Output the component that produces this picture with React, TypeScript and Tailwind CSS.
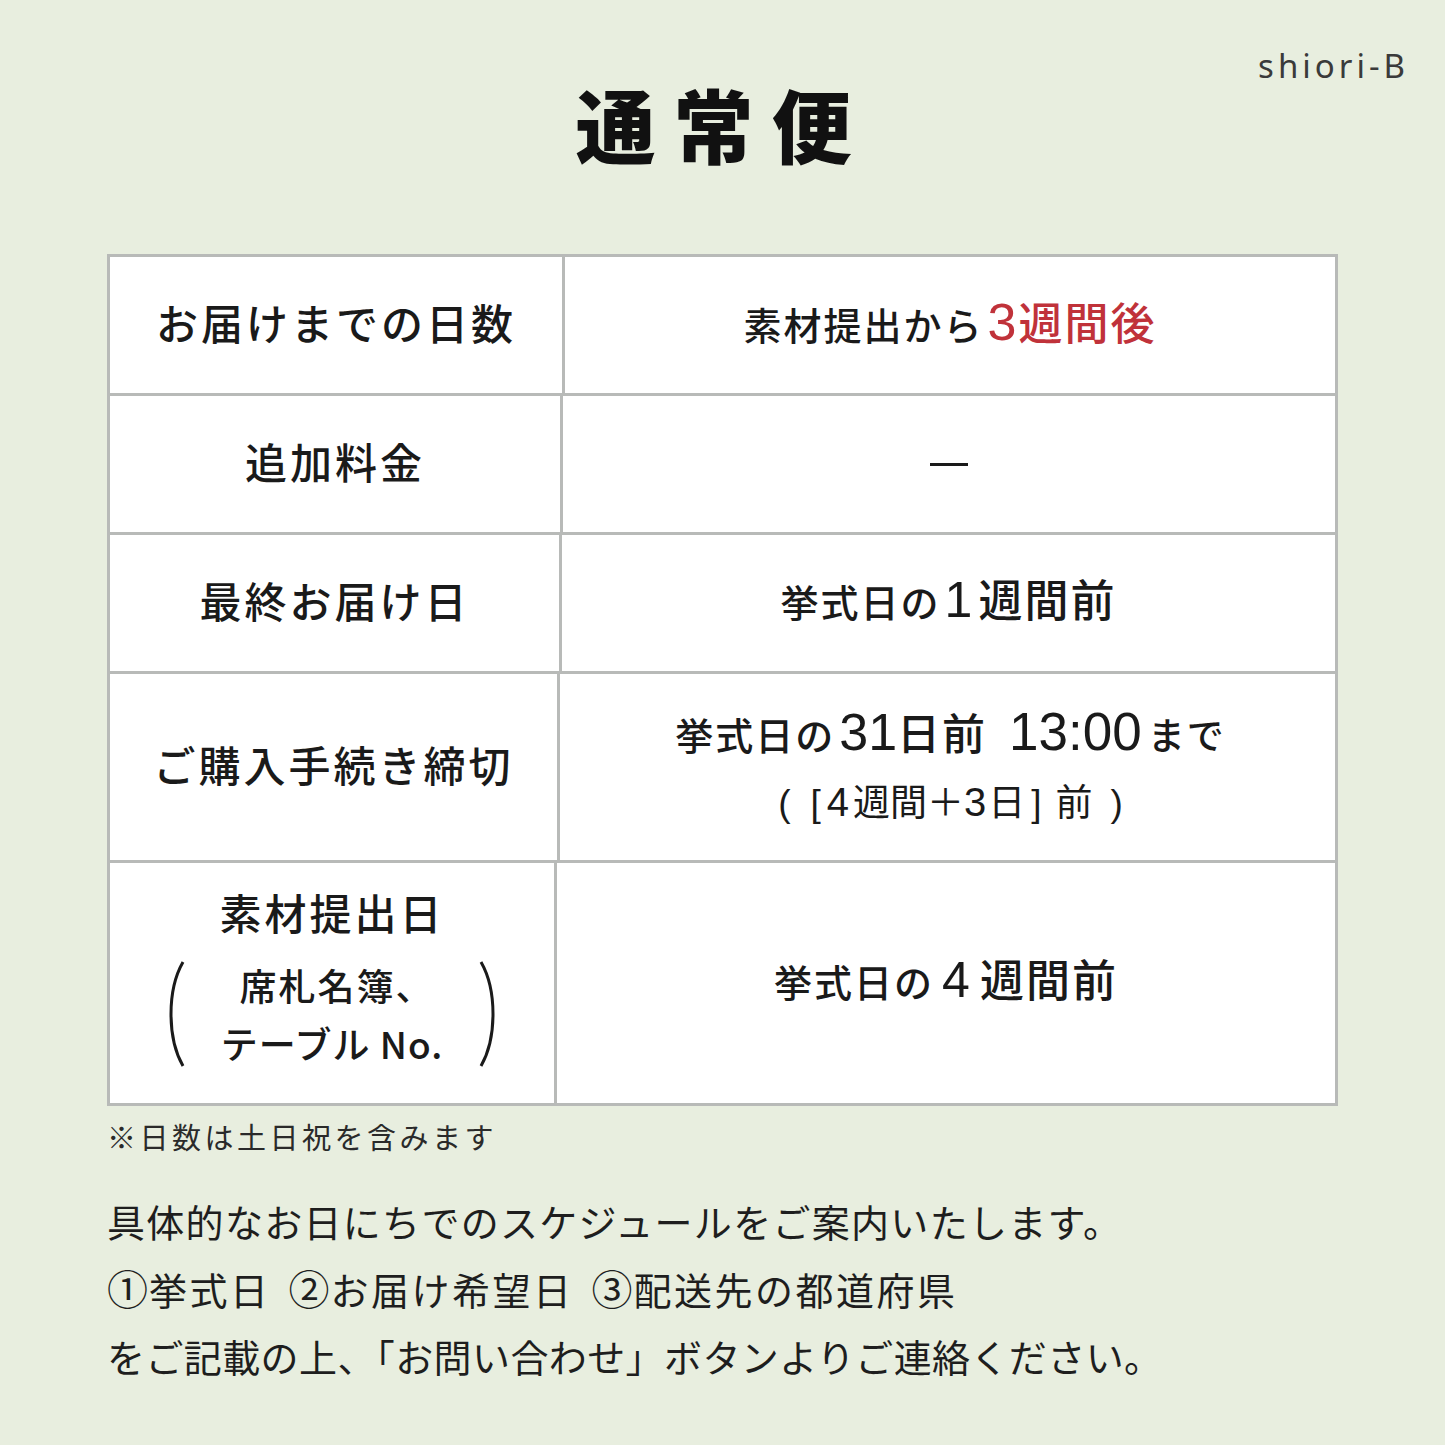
import React from "react";

const jp = "font-['Noto_Sans_CJK_JP','Noto_Sans',sans-serif]";
const num = "font-['Liberation_Sans','Noto_Sans_CJK_JP',sans-serif]";

function Paren({ flip }: { flip?: boolean }) {
  return (
    <svg
      width="24"
      height="108"
      viewBox="0 0 24 108"
      className={flip ? "-scale-x-100" : ""}
    >
      <path
        d="M20 2 C4 30 4 78 20 106"
        fill="none"
        stroke="#1a1a1a"
        strokeWidth="3"
      />
    </svg>
  );
}

interface RowProps {
  left: React.ReactNode;
  right: React.ReactNode;
  height: string;
  leftWidth: string;
  first?: boolean;
}

function Row({ left, right, height, leftWidth, first }: RowProps) {
  return (
    <div
      className={`flex ${height} ${first ? "" : "border-t-[3px] border-[#b8bab8]"}`}
    >
      <div
        className={`${leftWidth} flex shrink-0 items-center justify-center border-r-[3px] border-[#b8bab8] pb-[7px]`}
      >
        {left}
      </div>
      <div className="flex flex-1 items-center justify-center pb-[7px]">
        {right}
      </div>
    </div>
  );
}

const labelCls = `${jp} text-[42px] font-medium tracking-[3px] leading-none text-[#1a1a1a]`;
const valCls = `${jp} text-[38px] font-medium tracking-[2px] leading-none text-[#1a1a1a]`;

function Circled({ children }: { children: React.ReactNode }) {
  return (
    <span className="inline-block w-[42px] text-center text-[41px]">
      {children}
    </span>
  );
}

export default function App() {
  return (
    <div className="relative min-h-[1445px] w-[1445px] bg-[#e8eedf]">
      <div
        className={`absolute right-[36px] top-[41px] font-['Noto_Sans',sans-serif] text-[33px] tracking-[4px] text-[#3a3a3a]`}
      >
        shiori-B
      </div>

      <div className="flex flex-col items-center pt-[82px]">
        <h1
          className={`${jp} text-[80px] font-black leading-none tracking-[18px] text-[#111]`}
        >
          通常便
        </h1>
      </div>

      <div className="px-[107px] pt-[92px]">
        <div className="w-[1231px] border-[3px] border-[#b8bab8] bg-white">
          <Row
            first
            height="h-[136px]"
            leftWidth="w-[455px]"
            left={<span className={labelCls}>お届けまでの日数</span>}
            right={
              <span className={`${valCls} flex items-baseline`}>
                素材提出から
                <span className={`${num} ml-[4px] text-[52px] font-normal text-[#c0323a]`}>
                  3
                </span>
                <span className="text-[44px] text-[#c0323a]">週間後</span>
              </span>
            }
          />
          <Row
            height="h-[139px]"
            leftWidth="w-[453px]"
            left={<span className={labelCls}>追加料金</span>}
            right={<span className="mt-[7px] block h-[3px] w-[38px] bg-[#1a1a1a]" />}
          />
          <Row
            height="h-[139px]"
            leftWidth="w-[452px]"
            left={<span className={labelCls}>最終お届け日</span>}
            right={
              <span className={`${valCls} flex items-baseline`}>
                挙式日の
                <span className={`${num} mx-[4px] text-[50px] font-normal`}>1</span>
                <span className="text-[44px]">週間前</span>
              </span>
            }
          />
          <Row
            height="h-[189px]"
            leftWidth="w-[450px]"
            left={<span className={labelCls}>ご購入手続き締切</span>}
            right={
              <div className="flex flex-col items-center gap-[24px] pl-[6px]">
                <span className={`${valCls} flex items-baseline`}>
                  挙式日の
                  <span className={`${num} ml-[4px] text-[52px] font-normal tracking-normal`}>
                    31
                  </span>
                  <span className="text-[43px]">日前</span>
                  <span
                    className={`${num} ml-[22px] text-[53px] font-normal tracking-normal`}
                  >
                    13:00
                  </span>
                  <span className="ml-[6px] text-[37px]">まで</span>
                </span>
                <span
                  className={`${jp} flex items-baseline text-[37px] leading-none text-[#1a1a1a]`}
                >
                  <span className={num}>(</span>
                  <span className={`${num} ml-[20px]`}>[</span>
                  <span className={`${num} ml-[6px] text-[40px]`}>4</span>
                  <span className="ml-[4px]">週間</span>
                  <span>＋</span>
                  <span className={`${num} text-[40px]`}>3</span>
                  <span className="ml-[2px]">日</span>
                  <span className={`${num} ml-[6px]`}>]</span>
                  <span className="ml-[14px]">前</span>
                  <span className={`${num} ml-[18px]`}>)</span>
                </span>
              </div>
            }
          />
          <Row
            height="h-[243px]"
            leftWidth="w-[447px]"
            left={
              <div className="flex flex-col items-center">
                <span className={labelCls}>素材提出日</span>
                <div className="mt-[27px] flex items-center gap-[34px]">
                  <Paren />
                  <div
                    className={`${jp} flex flex-col items-center gap-[21px] text-[37px] font-medium leading-none text-[#1a1a1a]`}
                  >
                    <span className="pl-[10px] tracking-[2px]">席札名簿、</span>
                    <span className="tracking-[1px]">テーブル No.</span>
                  </div>
                  <Paren flip />
                </div>
              </div>
            }
            right={
              <span className={`${valCls} flex items-baseline`}>
                挙式日の
                <span className={`${num} mx-[8px] text-[50px] font-normal`}>4</span>
                <span className="text-[44px]">週間前</span>
              </span>
            }
          />
        </div>

        <p className={`${jp} mt-[16px] text-[29px] leading-none tracking-[3.5px] text-[#2a2a2a]`}>
          ※日数は土日祝を含みます
        </p>

        <div
          className={`${jp} mt-[36px] text-[38px] leading-[67px] text-[#1e1e1e]`}
        >
          <p className="tracking-[1.3px]">具体的なお日にちでのスケジュールをご案内いたします。</p>
          <p className="tracking-[2.5px]">
            <Circled>①</Circled>挙式日
            <span className="inline-block w-[18px]" />
            <Circled>②</Circled>お届け希望日
            <span className="inline-block w-[18px]" />
            <Circled>③</Circled>配送先の都道府県
          </p>
          <p className="tracking-[0.4px]">をご記載の上、「お問い合わせ」ボタンよりご連絡ください。</p>
        </div>
      </div>
    </div>
  );
}
